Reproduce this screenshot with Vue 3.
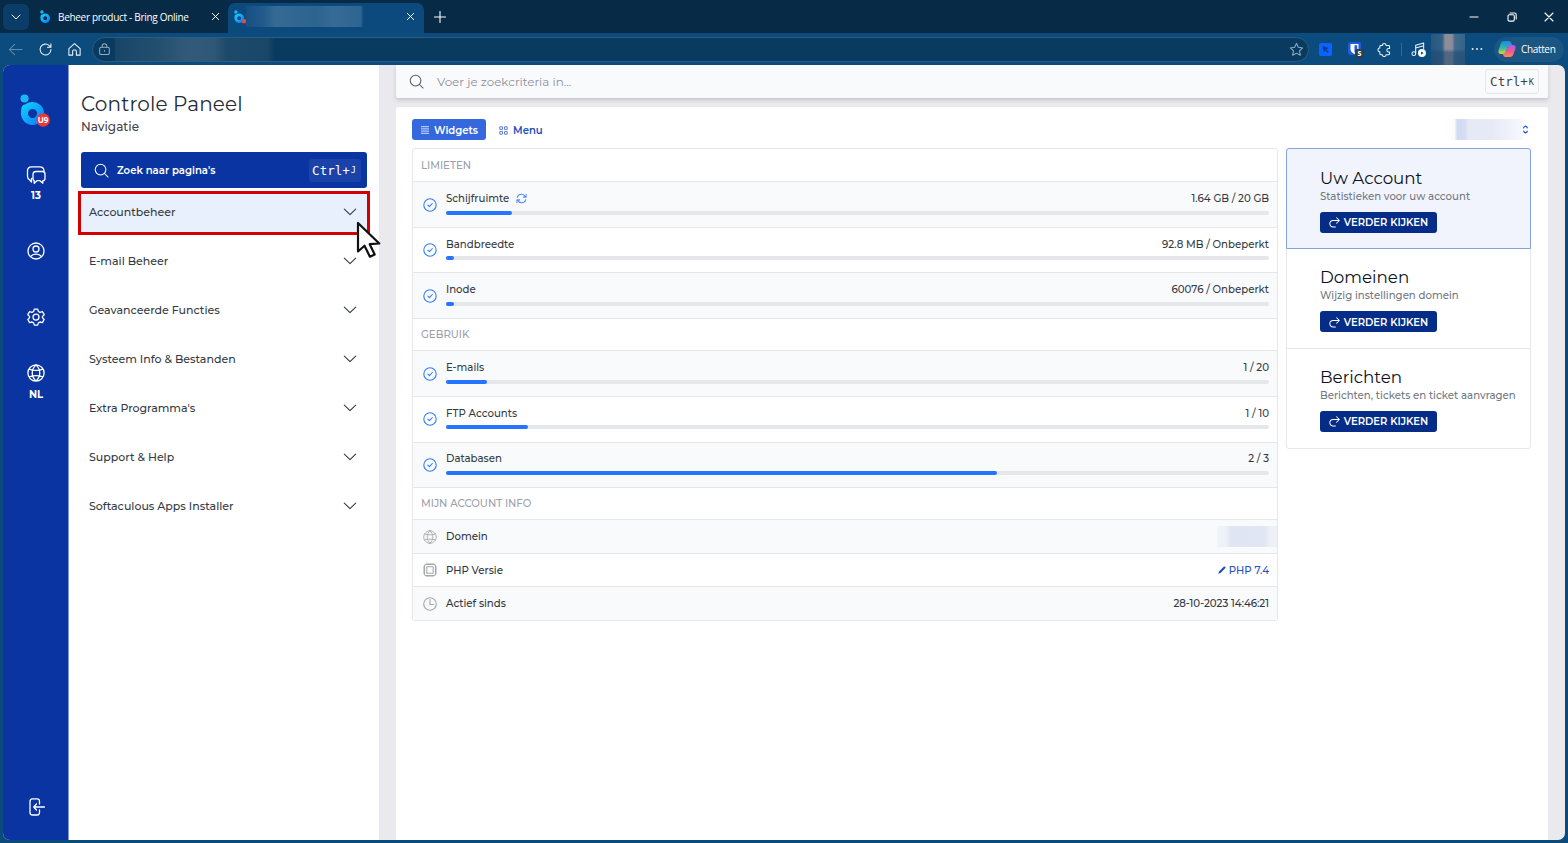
<template>
  <div class="browser">
    <header class="tabs">
      <div class="tabs__menu">
        <svg viewBox="0 0 16 16" width="14" height="14" class="line"><path d="M3.5 5.8 8 10.2l4.500-4.400" /></svg>
      </div>
      <div class="tab">
        <svg class="tab__logo" viewBox="0 0 32 36"><use href="#bring-logo" /></svg>
        <span class="tab__title">Beheer product - Bring Online</span>
        <svg class="line tab__close" viewBox="0 0 10 10"><path d="M1.500 1.500l7 7M8.500 1.500l-7 7" /></svg>
      </div>
      <div class="tab tab--active">
        <svg class="tab__logo" viewBox="0 0 32 36">
          <use href="#bring-logo" />
          <circle cx="27" cy="29" r="6" fill="#e5483f" />
        </svg>
        <span class="tab__smudge"></span>
        <svg class="line tab__close" viewBox="0 0 10 10"><path d="M1.500 1.500l7 7M8.500 1.500l-7 7" /></svg>
      </div>
      <svg class="line tabs__new" viewBox="0 0 12 12"><path d="M6 .5v11M.5 6h11" /></svg>
      <div class="tabs__window">
        <svg class="line" viewBox="0 0 10 10" width="10" height="10"><path d="M1 5h8" /></svg>
        <svg class="line" viewBox="0 0 10 10" width="10" height="10">
          <rect x="1" y="2.800" width="6.300" height="6.300" rx="1.300" />
          <path d="M3 1h4.300C8.500 1 9.200 1.700 9.200 2.800V7" />
        </svg>
        <svg class="line" viewBox="0 0 10 10" width="10" height="10"><path d="M1 1l8 8M9 1l-8 8" /></svg>
      </div>
    </header>

    <div class="toolbar">
      <svg class="line toolbar__back" viewBox="0 0 16 16" width="15" height="15"><path d="M15 8H1.500M7 2.500 1.500 8 7 13.500" /></svg>
      <svg class="line toolbar__reload" viewBox="0 0 16 16" width="15" height="15"><path d="M13.800 8A5.800 5.800 0 1 1 12 3.800l1.700 1.500M13.800 1.800v3.700h-3.700" /></svg>
      <svg class="line toolbar__home" viewBox="0 0 16 16" width="15" height="15"><path d="M2 7 8 1.700 14 7v7H10V9.800c0-1-.5-1.300-1-1.300H7c-.5 0-1 .3-1 1.300V14H2z" /></svg>
      <div class="address">
        <svg class="line" viewBox="0 0 14 14" width="13" height="13">
          <rect x="1.800" y="4.500" width="10.400" height="8" rx="1.800" />
          <path d="M4.500 4.500V3.300a2.500 2.500 0 0 1 5 0v1.200M7 8v1" />
        </svg>
        <span class="address__smudge"></span>
        <svg class="line address__star" viewBox="0 0 16 16" width="15" height="15"><path d="M8 1.500l2 4.200 4.600.6-3.400 3.200.9 4.600L8 11.900l-4.100 2.200.9-4.600L1.400 6.300 6 5.700z" /></svg>
      </div>
      <svg class="toolbar__ext1" viewBox="0 0 14 14" width="13" height="13">
        <rect width="14" height="14" rx="2" fill="#0b63ff" />
        <path d="M3.500 3.300l6.800 2.200-2.500 1.400 2.500 2.600-1 1-2.600-2.600L5.400 10.300z" fill="#0b3a90" />
      </svg>
      <svg class="toolbar__ext2" viewBox="0 0 16 16" width="16" height="16">
        <rect width="13" height="13" rx="2" fill="#1d5be3" />
        <path d="M2.500 2h8v5.500c0 2-2 3.600-4 4.500-2-.9-4-2.500-4-4.500z" fill="#fff" />
        <path d="M6.500 3.300h2.700v4c0 1.200-1.200 2.300-2.700 3.200z" fill="#1d5be3" />
        <rect x="7" y="7" width="9" height="9" rx="2" fill="#303d4c" />
        <text x="11.500" y="14" text-anchor="middle" class="ext-badge">s</text>
      </svg>
      <svg class="line toolbar__puzzle" viewBox="0 0 16 16" width="15" height="15"><path d="M5.700 3.700a2 2 0 0 1 4 0h2.700c.6 0 1 .4 1 1v2.200h-1a1.900 1.900 0 0 0 0 3.800h1v1.800c0 .6-.4 1-1 1H9.700a2 2 0 0 1-4 0H4c-.6 0-1-.4-1-1v-2a2 2 0 0 1 0-4V4.700c0-.6.400-1 1-1z" /></svg>
      <span class="toolbar__rule"></span>
      <svg class="line toolbar__music" viewBox="0 0 16 16" width="15" height="15">
        <circle cx="3" cy="12.500" r="2" />
        <path d="M5 12.500V3.500L13.500 1v6M5 6.500 13.500 4" />
        <circle cx="11.700" cy="11.800" r="3.700" fill="#fff" />
        <path d="M10.700 10v3.600l2.800-1.800z" class="music-play" />
      </svg>
      <span class="toolbar__avatar"></span>
      <svg class="toolbar__dots" viewBox="0 0 12 4" width="12" height="4" fill="#e3edf5">
        <circle cx="1.600" cy="2" r="1" /><circle cx="6" cy="2" r="1" /><circle cx="10.400" cy="2" r="1" />
      </svg>
      <div class="copilot">
        <svg viewBox="0 0 18 18" width="18" height="18">
          <defs>
            <linearGradient id="cp-a" x1="0" y1="0" x2="0" y2="1"><stop offset="0" stop-color="#1588ee" /><stop offset=".55" stop-color="#30bca0" /><stop offset="1" stop-color="#e8cf35" /></linearGradient>
            <linearGradient id="cp-b" x1="0" y1="0" x2="0" y2="1"><stop offset="0" stop-color="#a95cf0" /><stop offset=".5" stop-color="#ee5793" /><stop offset="1" stop-color="#ff8a4c" /></linearGradient>
          </defs>
          <path d="M6 1h5c1.300 0 1.800.8 2.300 2.300L14 5h-2c-1.600 0-2.200.8-2.700 2.400L8 11.500C7.400 13.200 6.700 14 5 14H2.800C.8 14 0 12.300.6 10.200L2.700 3.600C3.200 2 4.200 1 6 1z" fill="url(#cp-a)" />
          <path d="M12 17H7.500c-1.200 0-1.900-.7-2.300-2L4.800 14C6.800 14 7.500 13 8 11.500l1.300-4.100C9.800 5.800 10.500 5 12 5h3.200c2 0 2.800 1.600 2.200 3.700l-2.100 5.800C14.700 16 13.700 17 12 17z" fill="url(#cp-b)" />
        </svg>
        <span>Chatten</span>
      </div>
    </div>

    <div class="page">
      <aside class="rail">
        <svg class="rail__logo" viewBox="0 0 32 36" width="29" height="33">
          <defs>
            <linearGradient id="bring-g" x1="0" y1="0" x2="1" y2="1"><stop offset="0" stop-color="#12d8fa" /><stop offset="1" stop-color="#0877ff" /></linearGradient>
            <g id="bring-logo">
              <circle cx="5" cy="4.800" r="4.500" fill="#1cb5f5" />
              <path d="M1.200 20C1.200 16.500 1.600 13.500 3.500 11.800C6.500 11.800 8 9 13 8.600A12.700 12.700 0 1 1 1.200 20zM13.800 16.300a5 5 0 1 0 .1 0z" fill="url(#bring-g)" fill-rule="evenodd" />
            </g>
          </defs>
          <use href="#bring-logo" />
          <circle cx="25.500" cy="28.500" r="7.500" fill="#ea3738" />
          <text x="25.500" y="31.700" text-anchor="middle" class="rail__badge">U9</text>
        </svg>
        <div class="rail__item rail__item--chat">
          <svg class="line" viewBox="0 0 20 20" width="20" height="20">
            <path d="M6 13.500H5.500V17L3.500 14.800C2 14 1.500 12.500 1.500 11V6C1.500 3 3 2 5.500 1.900h8.300c2.700.1 4.200 1 4.200 4" />
            <path d="M10 6.500h6.500c1.800 0 2.500.8 2.500 2.500v4.200c0 1.700-.7 2.500-2.200 2.500v2.500l-2.800-2.500H11l-2.800 2.500v-2.600C7.300 15.300 7 14.500 7 13.200V9.500c0-2.200 1-3 3-3z" />
          </svg>
          <span>13</span>
        </div>
        <div class="rail__item rail__item--user">
          <svg class="line" viewBox="0 0 20 20" width="20" height="20">
            <circle cx="10" cy="10" r="8" /><circle cx="10" cy="8" r="3" /><path d="M4.700 15.500c2-3.300 8.600-3.300 10.600 0" />
          </svg>
        </div>
        <div class="rail__item rail__item--gear">
          <svg class="line" viewBox="0 0 20 20" width="20" height="20">
            <path d="M8.300 2.100h3.400l.7 2.400 1.600.9 2.400-.7 1.800 3-1.700 1.700v1.500l1.700 1.600-1.800 3.100-2.400-.6-1.600.9-.7 2.200H8.300l-.7-2.200-1.600-.9-2.400.6-1.800-3.100 1.700-1.600V9.400L1.800 7.700l1.800-3 2.400.7 1.600-.9z" />
            <circle cx="10" cy="10.100" r="3" />
          </svg>
        </div>
        <div class="rail__item rail__item--globe">
          <svg class="line" viewBox="0 0 20 20" width="20" height="20"><path :d="globe" /></svg>
          <span>NL</span>
        </div>
        <div class="rail__exit">
          <svg class="line" viewBox="0 0 20 20" width="20" height="20">
            <path d="M13.500 7V4.500c0-1.800-.7-2.600-2.400-2.600H6.500C4.800 1.900 4 2.700 4 4.500v11c0 1.700.8 2.500 2.500 2.500h4.600c1.700 0 2.400-.8 2.400-2.500V13M18.500 10H8M10.500 7 7.700 10l2.800 3" />
          </svg>
        </div>
      </aside>

      <nav class="nav">
        <h1 class="nav__title">Controle Paneel</h1>
        <p class="nav__sub">Navigatie</p>
        <div class="nav__search">
          <svg class="line" viewBox="0 0 16 16" width="15" height="15"><circle cx="7" cy="7" r="5.700" /><path d="M11.200 11.200 15 15" /></svg>
          <span>Zoek naar pagina's</span>
          <kbd>Ctrl+<small>J</small></kbd>
        </div>
        <ul class="nav__list">
          <li v-for="(item, i) in menu" :key="item" :class="{ active: i === 0 }">
            <span>{{ item }}</span>
            <svg class="line" viewBox="0 0 14 8" width="14" height="8"><path d="M1.300 1.200 7 6.600l5.700-5.400" /></svg>
          </li>
        </ul>
        <div class="nav__marker"></div>
        <svg class="nav__cursor" viewBox="0 0 26 38" width="26" height="38">
          <path d="M2 2v28.500l6.500-5.800 5.400 11 4.800-2.300-5-10.200 9.600-.7z" fill="#fff" stroke="#111" stroke-width="2.200" stroke-linejoin="round" />
        </svg>
      </nav>

      <main class="main">
        <div class="searchbar">
          <svg class="line" viewBox="0 0 16 16" width="15" height="15"><circle cx="7" cy="7" r="5.700" /><path d="M11.200 11.200 15 15" /></svg>
          <span>Voer je zoekcriteria in...</span>
          <kbd>Ctrl+<small>K</small></kbd>
        </div>

        <section class="content">
          <div class="views">
            <button class="views__btn views__btn--on" type="button">
              <svg viewBox="0 0 8 8" width="8" height="8"><path d="M0 .7h8M0 2.900h8M0 5.100h8M0 7.300h8" stroke="#b4c9f5" stroke-width="1.300" /></svg>
              Widgets
            </button>
            <button class="views__btn" type="button">
              <svg viewBox="0 0 9 9" width="9" height="9" class="line views__grid">
                <rect x=".8" y=".8" width="2.700" height="2.700" rx=".8" /><rect x="5.500" y=".8" width="2.700" height="2.700" rx=".8" />
                <rect x=".8" y="5.500" width="2.700" height="2.700" rx=".8" /><rect x="5.500" y="5.500" width="2.700" height="2.700" rx=".8" />
              </svg>
              Menu
            </button>
            <span class="views__smudge"></span>
            <svg class="line views__sort" viewBox="0 0 5 9" width="5" height="9"><path d="M.8 3V2.300L2.500 1l1.700 1.300V3M.8 6v.7L2.500 8l1.700-1.300V6" /></svg>
          </div>

          <div class="columns">
            <div class="stats">
              <template v-for="group in groups" :key="group.title">
                <h2 class="stats__head">{{ group.title }}</h2>
                <div v-for="(row, i) in group.rows" :key="row.label" class="metric" :class="{ 'is-grey': i % 2 === 0 }">
                  <svg class="line metric__check" viewBox="0 0 14 14" width="14" height="14"><circle cx="7" cy="7" r="6.200" /><path d="M4.800 7.200 6.400 8.700 9.300 5.500" /></svg>
                  <div class="metric__body">
                    <div class="metric__text">
                      <span>{{ row.label }}</span>
                      <svg v-if="row.refresh" class="line metric__refresh" viewBox="0 0 12 12" width="11" height="11">
                        <path d="M1.300 4.800A4.900 4.900 0 0 1 10.300 4M11 1.500v3H8M10.700 7.200A4.900 4.900 0 0 1 1.700 8M1 10.500v-3h3" />
                      </svg>
                      <span class="metric__value">{{ row.value }}</span>
                    </div>
                    <div class="metric__track"><div class="metric__fill" :style="{ width: row.percent + '%' }"></div></div>
                  </div>
                </div>
              </template>

              <h2 class="stats__head">MIJN ACCOUNT INFO</h2>
              <div class="info is-grey">
                <svg class="line" viewBox="1 1 18 18" width="14" height="14"><path :d="globe" /></svg>
                <span>Domein</span>
                <span class="info__smudge"></span>
              </div>
              <div class="info">
                <svg class="line" viewBox="0 0 14 14" width="14" height="14">
                  <rect x="1.500" y="1.500" width="11" height="11" rx="1.500" /><rect x="3.800" y="3.800" width="6.400" height="6.400" />
                  <path d="M4 0v1.500M6 0v1.500M8 0v1.500M10 0v1.500M4 12.500V14M6 12.500V14M8 12.500V14M10 12.500V14M0 4h1.500M0 6h1.500M0 8h1.500M0 10h1.500M12.500 4H14M12.500 6H14M12.500 8H14M12.500 10H14" />
                </svg>
                <span>PHP Versie</span>
                <a class="info__link">
                  <svg viewBox="0 0 8 8" width="8" height="8"><path d="M.3 7.700 1 5.500 5.700.8q.8-.7 1.500 0 .8.700 0 1.500L2.500 7z" fill="#1d4fc0" /></svg>PHP 7.4
                </a>
              </div>
              <div class="info is-grey">
                <svg class="line" viewBox="0 0 14 14" width="14" height="14"><circle cx="7" cy="7" r="6.300" /><path d="M7 2.500v5h3.500" /></svg>
                <span>Actief sinds</span>
                <span class="info__date">28-10-2023 14:46:21</span>
              </div>
            </div>

            <div class="cards">
              <article v-for="(card, i) in cards" :key="card.title" class="card" :class="{ 'card--active': i === 0 }">
                <h3>{{ card.title }}</h3>
                <p>{{ card.text }}</p>
                <button type="button">
                  <svg class="line" viewBox="0 0 12 12" width="11" height="11"><path d="M7 11H4.500a3.500 3.500 0 0 1 0-7.200h6.700M8.300.8l3 3-3 3" /></svg>
                  VERDER KIJKEN
                </button>
              </article>
            </div>
          </div>
        </section>
      </main>
      <div class="gutter"></div>
    </div>
  </div>
</template>

<script setup>
const globe = 'M10 1.900a8.100 8.100 0 1 0 0 16.200a8.100 8.100 0 1 0 0-16.200M10 1.900c-5 4.800-5 11.400 0 16.200M10 1.900c5 4.800 5 11.400 0 16.200M3 6.200c4.300 1.500 9.700 1.500 14 0M3 13.800c4.300-1.500 9.700-1.500 14 0';

const menu = [
  'Accountbeheer',
  'E-mail Beheer',
  'Geavanceerde Functies',
  'Systeem Info & Bestanden',
  "Extra Programma's",
  'Support & Help',
  'Softaculous Apps Installer',
];

const groups = [
  {
    title: 'LIMIETEN',
    rows: [
      { label: 'Schijfruimte', value: '1.64 GB / 20 GB', percent: 8, refresh: true },
      { label: 'Bandbreedte', value: '92.8 MB / Onbeperkt', percent: 1 },
      { label: 'Inode', value: '60076 / Onbeperkt', percent: 1 },
    ],
  },
  {
    title: 'GEBRUIK',
    rows: [
      { label: 'E-mails', value: '1 / 20', percent: 5 },
      { label: 'FTP Accounts', value: '1 / 10', percent: 10 },
      { label: 'Databasen', value: '2 / 3', percent: 67 },
    ],
  },
];

const cards = [
  { title: 'Uw Account', text: 'Statistieken voor uw account' },
  { title: 'Domeinen', text: 'Wijzig instellingen domein' },
  { title: 'Berichten', text: 'Berichten, tickets en ticket aanvragen' },
];
</script>

<style>
body {
  margin: 0;
  overflow: hidden;
}
</style>

<style scoped>
* {
  box-sizing: border-box;
}

.browser {
  width: 1568px;
  height: 843px;
  display: flex;
  flex-direction: column;
  background: #0b4b7c;
  font-family: Montserrat, Inter, "Open Sans", sans-serif;
  font-weight: 500;
  overflow: hidden;
}

svg {
  flex: none;
}

.line {
  fill: none;
  stroke: currentColor;
  stroke-width: 1.1;
  stroke-linecap: round;
  stroke-linejoin: round;
}

/* tab strip */
.tabs {
  height: 33px;
  flex: none;
  display: flex;
  align-items: center;
  background: #072a47;
  color: #fff;
  padding-left: 3px;
  font-family: "Segoe UI", "Open Sans", sans-serif;
}

.tabs__menu {
  width: 26px;
  height: 26px;
  border-radius: 6px;
  background: #0a3e68;
  display: flex;
  align-items: center;
  justify-content: center;
}

.tab {
  display: flex;
  align-items: center;
  align-self: stretch;
  width: 198px;
  padding: 0 7px 0 11px;
}

.tab__logo {
  width: 12px;
  height: 14px;
}

.tab__title {
  margin-left: 6px;
  font-size: 10px;
  letter-spacing: -0.3px;
  font-weight: 500;
  white-space: nowrap;
}

.tab__close {
  width: 9px;
  height: 9px;
  margin-left: auto;
}

.tab--active {
  width: 196px;
  margin: 3px 0 0 1px;
  padding: 0 9px 3px 6px;
  background: #0c4a7d;
  border-radius: 7px 7px 0 0;
}

.tab__smudge {
  width: 117px;
  height: 21px;
  background: linear-gradient(90deg, #164f82, #225b8b 15%, #356a94 25%, #2c6490 60%, #366b95 75%, #2d6591 98%, #134f80);
}

.tabs__new {
  width: 12px;
  height: 12px;
  margin-left: 10px;
}

.tabs__window {
  margin-left: auto;
  display: flex;
  gap: 27.5px;
  padding-right: 14px;
}

/* toolbar */
.toolbar {
  height: 32px;
  flex: none;
  display: flex;
  align-items: center;
  background: #0b4b7e;
  color: #eef5fa;
  padding-left: 8px;
  font-family: "Segoe UI", "Open Sans", sans-serif;
}

.toolbar__back {
  color: #628caf;
}

.toolbar__reload {
  margin-left: 15px;
}

.toolbar__home {
  margin-left: 14px;
}

.address {
  width: 1217px;
  height: 25px;
  margin-left: 10px;
  border-radius: 13px;
  border: 1px solid #2c5c80;
  background: #093a60;
  display: flex;
  align-items: center;
  padding: 0 4px 0 5px;
  color: #8fadc3;
}

.address__smudge {
  width: 160px;
  height: 23px;
  margin-left: 4px;
  background: linear-gradient(90deg, #184668, #224e6e 25%, #31597a 45%, #2f5776 62%, #1d4a6a 70%, #194768 95%, #093a60);
}

.address__star {
  margin-left: auto;
}

.toolbar__ext1 {
  margin-left: 10px;
}

.toolbar__ext2 {
  margin-left: 16px;
  margin-top: 2px;
}

.ext-badge {
  font: 700 8px "Open Sans", sans-serif;
  fill: #fff;
}

.toolbar__puzzle {
  margin-left: 13px;
}

.toolbar__rule {
  width: 1px;
  height: 13px;
  margin-left: 9px;
  background: #34688f;
}

.toolbar__music {
  margin-left: 9px;
}

.music-play {
  fill: #0b4b7e;
  stroke: none;
}

.toolbar__avatar {
  width: 34px;
  align-self: stretch;
  margin: 1px 0 0 5px;
  background:
    linear-gradient(180deg, transparent 48%, rgba(30, 70, 110, 0.55) 60%),
    linear-gradient(90deg, #26577e, #326187 33%, #8d8d98 42%, #8d8d98 62%, #426c8d 70%, #32658a);
}

.toolbar__dots {
  margin-left: 6px;
}

.copilot {
  width: 70px;
  height: 25px;
  margin-left: 10.5px;
  border-radius: 13px;
  background: #1b5582;
  display: flex;
  align-items: center;
  gap: 5.5px;
  padding-left: 4px;
  font-size: 10px;
  letter-spacing: -0.35px;
  color: #fff;
}

/* page frame */
.page {
  flex: 1;
  display: flex;
  margin: 0 3px 3px;
  border-radius: 7px;
  overflow: hidden;
  background: #e9e9ee;
}

.rail {
  width: 66px;
  flex: none;
  background: #0934a1;
  border-right: 1px solid #8499d2;
  color: #fff;
  display: flex;
  flex-direction: column;
  align-items: center;
  padding: 29px 0 0 1px;
}

.rail__logo {
  overflow: visible;
  margin-right: 3px;
}

.rail__badge {
  font: 700 9px "Open Sans", sans-serif;
  fill: #fff;
}

.rail__item {
  display: flex;
  flex-direction: column;
  align-items: center;
  font-size: 10px;
  font-weight: 700;
  line-height: 12px;
}

.rail__item .line,
.rail__exit .line {
  stroke-width: 1.3;
}

.rail__item--chat {
  margin-top: 38px;
  gap: 5px;
}

.rail__item--user {
  margin-top: 39px;
}

.rail__item--gear {
  margin-top: 46px;
}

.rail__item--globe {
  margin-top: 36px;
  gap: 6px;
}

.rail__exit {
  margin-top: auto;
  height: 43px;
}

/* navigation */
.nav {
  position: relative;
  width: 310px;
  flex: none;
  background: #fff;
  padding: 26px 12px 0;
}

.nav__title {
  margin: 0;
  font-size: 20px;
  line-height: 26px;
  font-weight: 400;
  letter-spacing: 0.13px;
  color: #232b36;
}

.nav__sub {
  margin: 0;
  font-size: 12px;
  line-height: 19px;
  color: #3f444c;
}

.nav__search {
  width: 286px;
  height: 36px;
  margin-top: 16px;
  border-radius: 3px;
  background: #0934a1;
  color: #fff;
  display: flex;
  align-items: center;
  padding: 0 6px 0 13px;
  font-size: 10.150px;
  font-weight: 600;
}

.nav__search span {
  margin-left: 8px;
}

kbd {
  margin-left: auto;
  display: flex;
  align-items: center;
  justify-content: center;
  font: 12.500px "DejaVu Sans Mono", monospace;
  border-radius: 3px;
}

kbd small {
  font-size: 8.500px;
  margin-left: 1px;
}

.nav__search kbd {
  width: 52px;
  height: 23px;
  padding-right: 2px;
  background: #1a42a8;
}

.nav__list {
  list-style: none;
  margin: 3px 0 0 -3px;
  padding: 0;
  width: 292px;
  display: flex;
  flex-direction: column;
  gap: 8px;
}

.nav__list li {
  height: 41px;
  display: flex;
  align-items: center;
  justify-content: space-between;
  padding: 0 13px 0 11px;
  font-size: 11px;
  color: #353b44;
}

.nav__list li.active {
  background: #e8f0fe;
}

.nav__marker {
  position: absolute;
  left: 9px;
  top: 126px;
  width: 292px;
  height: 44px;
  border: 3px solid #d20000;
}

.nav__cursor {
  position: absolute;
  left: 287px;
  top: 156px;
}

/* main */
.main {
  width: 1152px;
  margin-left: 17px;
  display: flex;
  flex-direction: column;
}

.searchbar {
  height: 33px;
  flex: none;
  background: #f9fafc;
  border-radius: 0 0 2px 2px;
  box-shadow: 0 2px 4px rgba(0, 0, 0, 0.16);
  display: flex;
  align-items: center;
  padding: 0 9px 0 13px;
  font-size: 11.900px;
  font-weight: 400;
  color: #8b909c;
}

.searchbar > svg {
  color: #545a66;
}

.searchbar span {
  margin-left: 13px;
}

.searchbar kbd {
  width: 54px;
  height: 25px;
  border: 1px solid #e5e7eb;
  color: #3d424c;
}

.content {
  flex: 1;
  margin-top: 9px;
  background: #fff;
  border-radius: 3px 3px 0 0;
  padding: 12px 17px 0 16px;
}

.views {
  height: 21px;
  display: flex;
  align-items: center;
}

.views__btn {
  height: 21px;
  display: flex;
  align-items: center;
  gap: 5px;
  padding: 1px 9px 0;
  border: 0;
  border-radius: 3px;
  background: transparent;
  color: #2450bd;
  font-family: inherit;
  font-size: 10.100px;
  font-weight: 600;
  white-space: nowrap;
}

.views__btn--on {
  width: 74px;
  margin-right: 4px;
  background: #3468dc;
  color: #fff;
}

.views__grid {
  opacity: 0.7;
}

.views__smudge {
  width: 78px;
  height: 21px;
  margin-left: auto;
  background: linear-gradient(90deg, #fff, #fafbfe 12%, #d0daf2 16%, #d5def4 26%, #e6eaf7 30%, #e6eaf7 60%, #f6f8fc);
}

.views__sort {
  color: #1e50d0;
  margin: 0 3px 0 0;
}

.columns {
  display: flex;
  align-items: flex-start;
  gap: 8px;
  margin-top: 8px;
}

.stats {
  width: 866px;
  border: 1px solid #e5e7eb;
  border-radius: 3px;
  overflow: hidden;
}

.stats__head {
  margin: 0;
  height: 32.300px;
  display: flex;
  align-items: center;
  padding-left: 8px;
  font-size: 10.200px;
  font-weight: 500;
  color: #9ca1ac;
}

.is-grey {
  background: #f9fafb;
}

.metric {
  height: 45.600px;
  border-top: 1px solid #e5e7eb;
  display: flex;
  align-items: center;
  padding: 0 8px 0 9.500px;
  color: #353b45;
}

.stats__head:not(:first-child) {
  border-top: 1px solid #e5e7eb;
}

.metric__check {
  color: #347cf8;
}

.metric__body {
  flex: 1;
  margin-left: 9.500px;
  padding-bottom: 4px;
}

.metric__text {
  height: 16px;
  display: flex;
  align-items: center;
  font-size: 10.200px;
}

.metric__refresh {
  color: #5189f5;
  margin-left: 7px;
}

.metric__value {
  margin-left: auto;
}

.metric__track {
  height: 4px;
  margin-top: 4px;
  border-radius: 2px;
  background: #e5e7eb;
}

.metric__fill {
  height: 4px;
  border-radius: 2px;
  background: #2474ff;
}

.info {
  height: 33.500px;
  border-top: 1px solid #e5e7eb;
  display: flex;
  align-items: center;
  padding: 0 8px 0 9.500px;
  font-size: 10.200px;
  color: #30363f;
}

.info > svg {
  color: #a5a7aa;
}

.info > svg + span {
  margin-left: 9.500px;
}

.info__smudge {
  width: 60px;
  height: 21px;
  margin: 0 -8px 0 auto;
  background: linear-gradient(90deg, #f1f4f9, #edf0f7 15%, #dfe5f3 24%, #e2e6f3 80%, #eef0f7 88%);
}

.info__link {
  margin-left: auto;
  display: flex;
  align-items: center;
  gap: 3px;
  color: #2450bd;
}

.info__date {
  margin-left: auto;
}

/* cards */
.cards {
  width: 245px;
  border: 1px solid #e5e7eb;
  border-radius: 3px;
}

.card {
  height: 99.500px;
  padding: 16px 0 0 33px;
  border-bottom: 1px solid #e5e7eb;
}

.card:last-child {
  height: 99px;
  border-bottom: 0;
}

.card--active {
  margin: -1px -1px 0;
  height: 101px;
  padding: 16.500px 0 0 33px;
  border: 1px solid #85a2e2;
  border-radius: 3px 3px 0 0;
  background: #f1f4fd;
}

.card h3 {
  margin: 0;
  font-size: 16.700px;
  line-height: 24px;
  font-weight: 400;
  color: #0c111b;
}

.card p {
  margin: 0;
  font-size: 10.200px;
  line-height: 14px;
  color: #747982;
  white-space: nowrap;
}

.card button {
  width: 117px;
  height: 21px;
  margin-top: 8px;
  padding: 1px 0 0;
  border: 0;
  border-radius: 3px;
  background: #052c87;
  color: #fff;
  display: flex;
  align-items: center;
  justify-content: center;
  gap: 4px;
  font-family: inherit;
  font-size: 10.050px;
  font-weight: 600;
}

.gutter {
  flex: 1;
}
</style>
